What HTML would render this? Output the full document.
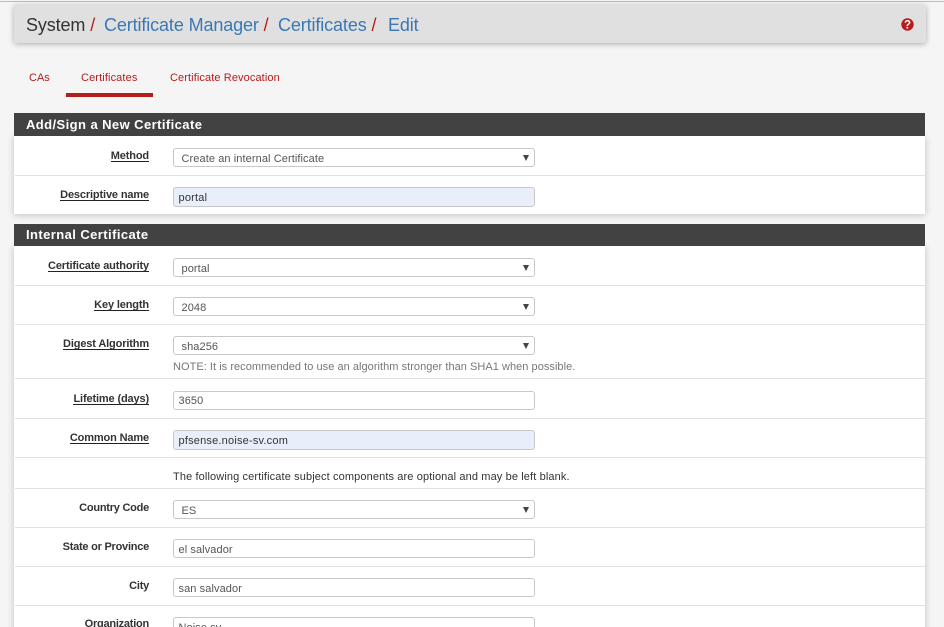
<!DOCTYPE html>
<html><head><meta charset="utf-8">
<style>
html,body{margin:0;padding:0;width:944px;height:627px;overflow:hidden}
body{background:#f5f5f5;font-family:"Liberation Sans",sans-serif;font-size:11px;color:#333}
#w{left:0;top:0;width:944px;height:627px;overflow:hidden;background:#f5f5f5}
div{position:absolute;white-space:nowrap}
.top{left:0;top:1px;width:944px;height:1px;background:#bdbdbd}
.bar{left:14px;top:5px;width:912px;height:38px;background:#e0e0e0;border-radius:2px;box-shadow:0 1px 6px rgba(0,0,0,.3)}
.c{top:14px;font-size:18px;line-height:22px;color:#3a78b5;letter-spacing:-.12px}
.s{color:#b71c1c}
.tab{top:71px;font-size:11px;line-height:14px;color:#b71c1c;letter-spacing:.12px}
.ul{left:66px;top:93px;width:87px;height:4px;background:#b71c1c}
.panel{left:14px;width:911px;background:#fff;box-shadow:0 1px 7px rgba(0,0,0,.22)}
.head{left:14px;width:911px;background:#424242;color:#fff;font-weight:bold;font-size:13px;line-height:23px;letter-spacing:.42px;text-indent:12px}
.hr{left:15px;width:910px;height:1px;background:#e2e2e2}
.l{right:795px;font-weight:bold;font-size:11px;height:11px;line-height:13px;color:#333;letter-spacing:-.24px}
.l.u{border-bottom:1px solid #222;letter-spacing:-.14px}
.f{left:173px;width:360px;height:17px;border:1px solid #c8c8c8;border-radius:3px;background:#fff;font-size:11px;line-height:20px;color:#555;letter-spacing:.09px;text-indent:4.5px}
.f.sel{text-indent:7.5px}
.f.sel:after{content:"";position:absolute;right:5px;top:6px;width:0;height:0;border-left:3.5px solid transparent;border-right:3.5px solid transparent;border-top:6px solid #444}
.f.blue{background:#e8effb;color:#333;height:18px;letter-spacing:.2px}
.n{left:173px;font-size:11px;line-height:14px;letter-spacing:.04px}
</style></head><body>
<div id="w">
<div class="top"></div>
<div class="bar"></div>
<div class="c" style="left:26px;color:#333">System <span class="s">/</span></div>
<div class="c" style="left:104px">Certificate Manager <span class="s">/</span></div>
<div class="c" style="left:278px">Certificates <span class="s">/</span></div>
<div class="c" style="left:388px">Edit</div>
<svg style="position:absolute;left:901px;top:18px" width="13" height="13" viewBox="0 0 13 13"><circle cx="6.5" cy="6.5" r="6.2" fill="#b71c1c"/><text x="6.5" y="10.6" text-anchor="middle" font-family="Liberation Sans" font-weight="bold" font-size="11.5" fill="#fff">?</text></svg>

<div class="tab" style="left:29px;letter-spacing:0">CAs</div>
<div class="tab" style="left:81px">Certificates</div>
<div class="tab" style="left:170px;letter-spacing:.1px">Certificate Revocation</div>
<div class="ul"></div>

<div class="panel" style="top:136px;height:78px"></div>
<div class="head" style="top:113px;height:23px;line-height:24px">Add/Sign a New Certificate</div>
<div class="hr" style="top:175px"></div>
<div class="l u" style="top:150px">Method</div>
<div class="f sel" style="top:148px">Create an internal Certificate</div>
<div class="l u" style="top:189px">Descriptive name</div>
<div class="f blue" style="top:187px">portal</div>

<div class="panel" style="top:246px;height:400px"></div>
<div class="head" style="top:224px;height:22px;line-height:22px">Internal Certificate</div>
<div class="hr" style="top:285px"></div>
<div class="hr" style="top:324px"></div>
<div class="hr" style="top:378px"></div>
<div class="hr" style="top:418px"></div>
<div class="hr" style="top:457px"></div>
<div class="hr" style="top:488px"></div>
<div class="hr" style="top:527px"></div>
<div class="hr" style="top:566px"></div>
<div class="hr" style="top:605px"></div>

<div class="l u" style="top:260px">Certificate authority</div>
<div class="f sel" style="top:258px">portal</div>
<div class="l u" style="top:299px">Key length</div>
<div class="f sel" style="top:297px">2048</div>
<div class="l u" style="top:338px">Digest Algorithm</div>
<div class="f sel" style="top:336px">sha256</div>
<div class="n" style="top:360px;color:#777">NOTE: It is recommended to use an algorithm stronger than SHA1 when possible.</div>
<div class="l u" style="top:393px">Lifetime (days)</div>
<div class="f" style="top:391px;line-height:18px">3650</div>
<div class="l u" style="top:432px">Common Name</div>
<div class="f blue" style="top:430px">pfsense.noise-sv.com</div>
<div class="n" style="top:470px;color:#333;letter-spacing:.12px">The following certificate subject components are optional and may be left blank.</div>
<div class="l" style="top:502px">Country Code</div>
<div class="f sel" style="top:500px">ES</div>
<div class="l" style="top:541px">State or Province</div>
<div class="f" style="top:539px">el salvador</div>
<div class="l" style="top:580px">City</div>
<div class="f" style="top:578px">san salvador</div>
<div class="l" style="top:618px">Organization</div>
<div class="f" style="top:617px">Noise.sv</div>
</div>
</body></html>
